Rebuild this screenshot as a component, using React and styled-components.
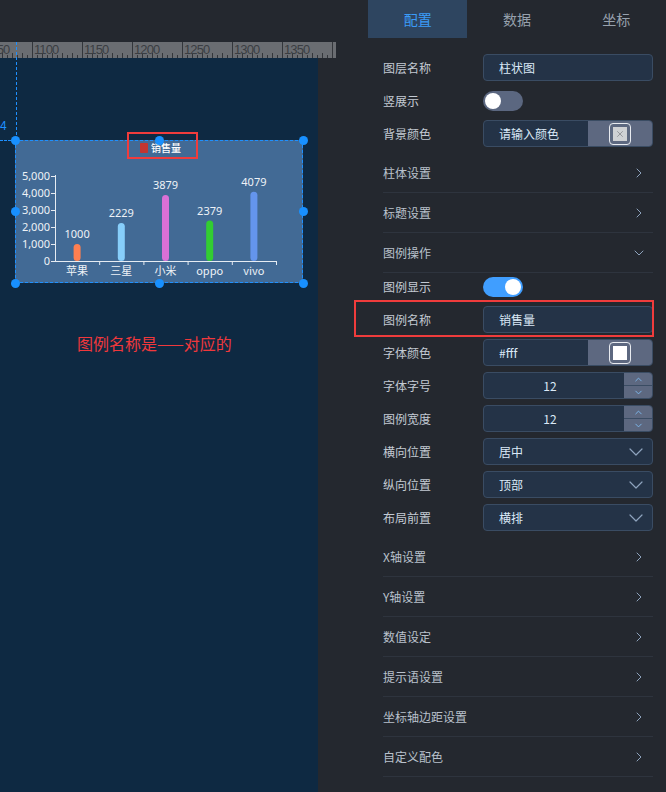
import styled, { createGlobalStyle } from 'styled-components';
import { ChevronRight, ChevronDown, ChevronUp, X } from 'lucide-react';

const GlobalStyle = createGlobalStyle`
  html, body {
    margin: 0;
    padding: 0;
    background: #24282f;
  }
  body {
    font-family: "Noto Sans CJK SC", "Noto Sans", sans-serif;
  }
  #root {
    width: 666px;
    height: 792px;
    overflow: hidden;
  }
`;

const CN = '"Noto Sans CJK SC", "Noto Sans", sans-serif';

const DATA = [
  { name: '苹果', value: 1000, color: '#ff7f50' },
  { name: '三星', value: 2229, color: '#87cefa' },
  { name: '小米', value: 3879, color: '#da70d6' },
  { name: 'oppo', value: 2379, color: '#32cd32' },
  { name: 'vivo', value: 4079, color: '#6495ed' },
];

const Page = styled.div`
  display: flex;
  width: 666px;
  height: 792px;
  background: #24282f;
  overflow: hidden;
`;

/* ---------- left: editor workspace ---------- */

const Workspace = styled.div`
  position: relative;
  width: 368px;
  display: flex;
  flex-direction: column;
`;

const TopGap = styled.div`
  height: 42px;
`;

const RulerSvg = styled.svg`
  display: block;
  width: 336px;
  height: 16px;
  background: #6a6d72;
`;

const Canvas = styled.div`
  position: relative;
  flex: 1;
  width: 318px;
  background: #0e2942;
`;

const GuideV = styled.div`
  position: absolute;
  left: 16px;
  top: 42px;
  height: 98px;
  border-left: 1px dashed #1e90ff;
  z-index: 2;
`;

const GuideH = styled.div`
  position: absolute;
  left: 0;
  top: 82px;
  width: 15px;
  border-top: 1px dashed #1e90ff;
`;

const GuideLabel = styled.span`
  position: absolute;
  left: 0;
  top: 61px;
  font: 12px "Liberation Sans", sans-serif;
  color: #1e90ff;
`;

const ChartBox = styled.div`
  position: absolute;
  left: 15px;
  top: 82px;
  width: 288px;
  height: 143px;
  background: #426a95;
  outline: 1px dashed #1e90ff;
  outline-offset: -1px;

  svg {
    display: block;
  }
`;

const Handle = styled.span`
  position: absolute;
  left: calc(${(p) => p.$x}% - 4.5px);
  top: calc(${(p) => p.$y}% - 4.5px);
  width: 9px;
  height: 9px;
  border-radius: 50%;
  background: #1890ff;
`;

const LegendMark = styled.span`
  position: absolute;
  left: 112px;
  top: -8px;
  width: 71px;
  height: 27px;
  box-sizing: border-box;
  border: 2px solid #f03c3c;
`;

const Note = styled.div`
  position: absolute;
  left: 77px;
  top: 273px;
  font: 16px ${CN};
  color: #f0383c;
  white-space: nowrap;
`;

function Ruler() {
  const ticks = [];
  for (let x = -18; x <= 336; x += 5) {
    const rel = (x + 18) % 50;
    const len = rel === 0 ? 16 : rel % 10 === 0 ? 5 : 3;
    ticks.push(<line key={x} x1={x + 0.5} x2={x + 0.5} y1={16 - len} y2={16} stroke="#33363b" strokeWidth="1" />);
  }
  const labels = [];
  for (let i = 0; i < 7; i++) {
    const x = -18 + i * 50;
    labels.push(
      <text key={i} x={x + 2} y={12} fontSize="13" fill="#3a3d42" fontFamily="'Liberation Sans', sans-serif" letterSpacing="-0.9">
        {1050 + i * 50}
      </text>
    );
  }
  return (
    <RulerSvg viewBox="0 0 336 16">
      {ticks}
      {labels}
    </RulerSvg>
  );
}

function BarChart() {
  const x0 = 40;
  const y0 = 121;
  const step = 44.2;
  const scale = 85 / 5000;
  return (
    <svg width="288" height="143" viewBox="0 0 288 143">
      <rect x="125" y="3" width="8" height="10" rx="1" fill="#c23531" />
      <text x="136" y="12" fontSize="10" fontWeight="500" fill="#fff" fontFamily={CN}>
        销售量
      </text>
      <line x1={x0 + 0.5} x2={x0 + 0.5} y1={35} y2={y0} stroke="#e6ecf3" />
      {[0, 1000, 2000, 3000, 4000, 5000].map((v) => {
        const y = y0 - v * scale;
        return (
          <g key={v}>
            <line x1={x0 - 4} x2={x0} y1={y + 0.5} y2={y + 0.5} stroke="#e6ecf3" />
            <text x={x0 - 5} y={y + 4} fontSize="11" textAnchor="end" fill="#eef2f7" fontFamily="'Noto Sans', sans-serif">
              {v.toLocaleString('en-US')}
            </text>
          </g>
        );
      })}
      <line x1={x0} x2={x0 + step * 5} y1={y0 + 0.5} y2={y0 + 0.5} stroke="#e6ecf3" />
      {DATA.map((d, i) => {
        const cx = x0 + step * i + step / 2;
        const h = d.value * scale;
        return (
          <g key={d.name}>
            <line x1={x0 + step * (i + 1) + 0.5} x2={x0 + step * (i + 1) + 0.5} y1={y0} y2={y0 + 4} stroke="#e6ecf3" />
            <rect x={cx - 3.5} y={y0 - h} width="7" height={h} rx="3.5" fill={d.color} />
            <text x={cx} y={y0 - h - 6} fontSize="11" textAnchor="middle" fill="#eef2f7" fontFamily="'Noto Sans', sans-serif">
              {d.value}
            </text>
            <text x={cx} y={y0 + 14} fontSize="11" textAnchor="middle" fill="#eef2f7" fontFamily={CN}>
              {d.name}
            </text>
          </g>
        );
      })}
    </svg>
  );
}

/* ---------- right: property panel ---------- */

const Panel = styled.aside`
  width: 298px;
  display: flex;
  flex-direction: column;
  background: #24282f;
`;

const Tabs = styled.div`
  display: flex;
  height: 38px;
`;

const Tab = styled.div`
  flex: 1;
  display: flex;
  align-items: center;
  justify-content: center;
  font-size: 14px;
  color: ${(p) => (p.$active ? '#3b9cf8' : '#97a1ad')};
  background: ${(p) => (p.$active ? '#2e4560' : 'transparent')};
`;

const Form = styled.div`
  padding: 16px 13px 0 15px;
  display: flex;
  flex-direction: column;
`;

const Group = styled.div`
  display: flex;
  flex-direction: column;
  gap: 6px;
  margin-bottom: 6px;
`;

const FieldRow = styled.div`
  position: relative;
  display: grid;
  grid-template-columns: 100px 1fr;
  align-items: center;
  height: 27px;

  ${(p) =>
    p.$highlight &&
    `
    &::after {
      content: '';
      position: absolute;
      left: -29px;
      right: -1px;
      top: -6px;
      bottom: -4px;
      border: 2px solid #f03c3c;
      pointer-events: none;
    }
  `}
`;

const Label = styled.span`
  font-size: 12px;
  color: #c3cad3;
`;

const InputBox = styled.div`
  height: 27px;
  box-sizing: border-box;
  display: flex;
  align-items: center;
  background: #243347;
  border: 1px solid #3a4c63;
  border-radius: 4px;
  overflow: hidden;
  font-size: 12px;
  color: #dbe9f7;
`;

const InputText = styled.span`
  flex: 1;
  padding-left: 15px;
  text-align: ${(p) => (p.$center ? 'center' : 'left')};
  ${(p) => p.$center && 'padding: 0 8px 0 0;'}
`;

const ColorSide = styled.div`
  width: 64px;
  align-self: stretch;
  display: flex;
  align-items: center;
  justify-content: center;
  background: #5d6880;
`;

const Swatch = styled.span`
  width: 22px;
  height: 22px;
  box-sizing: border-box;
  border: 1.5px solid #e8ebf0;
  border-radius: 4px;
  padding: 3px;
  display: flex;
`;

const SwatchFill = styled.span`
  flex: 1;
  display: flex;
  align-items: center;
  justify-content: center;
  background: ${(p) => p.$color};
`;

const Spinner = styled.div`
  width: 28px;
  align-self: stretch;
  display: flex;
  flex-direction: column;
  background: #5d6880;
`;

const SpinBtn = styled.span`
  flex: 1;
  display: flex;
  align-items: center;
  justify-content: center;
  color: #7ebaf0;
  & + & {
    border-top: 1px solid #3a4c63;
  }
`;

const SelectIcon = styled.span`
  display: flex;
  color: #8ea3bd;
  margin-right: 4px;
`;

const Toggle = styled.span`
  position: relative;
  width: 40px;
  height: 20px;
  border-radius: 10px;
  background: ${(p) => (p.$on ? '#409eff' : '#5b6780')};

  &::after {
    content: '';
    position: absolute;
    top: 2px;
    left: ${(p) => (p.$on ? '22px' : '2px')};
    width: 16px;
    height: 16px;
    border-radius: 50%;
    background: #fff;
  }
`;

const CollapseRow = styled.div`
  height: 40px;
  box-sizing: border-box;
  display: flex;
  align-items: center;
  justify-content: space-between;
  border-bottom: 1px solid #2e343e;
  font-size: 12px;
  color: #b9c1cc;
`;

const RowIcon = styled.span`
  display: flex;
  color: #8ea3bd;
  margin-right: 6px;
`;

function Collapse({ title, open }) {
  return (
    <CollapseRow>
      <span>{title}</span>
      <RowIcon>{open ? <ChevronDown size={16} strokeWidth={1.5} /> : <ChevronRight size={16} strokeWidth={1.5} />}</RowIcon>
    </CollapseRow>
  );
}

function TextField({ label, value, highlight }) {
  return (
    <FieldRow $highlight={highlight}>
      <Label>{label}</Label>
      <InputBox>
        <InputText>{value}</InputText>
      </InputBox>
    </FieldRow>
  );
}

function ToggleField({ label, on }) {
  return (
    <FieldRow>
      <Label>{label}</Label>
      <Toggle $on={on} />
    </FieldRow>
  );
}

function ColorField({ label, value, color }) {
  return (
    <FieldRow>
      <Label>{label}</Label>
      <InputBox>
        <InputText>{value}</InputText>
        <ColorSide>
          <Swatch>
            <SwatchFill $color={color || '#cfd1d4'}>
              {!color && <X size={10} strokeWidth={2} color="#8a8d92" />}
            </SwatchFill>
          </Swatch>
        </ColorSide>
      </InputBox>
    </FieldRow>
  );
}

function NumberField({ label, value }) {
  return (
    <FieldRow>
      <Label>{label}</Label>
      <InputBox>
        <InputText $center>{value}</InputText>
        <Spinner>
          <SpinBtn>
            <ChevronUp size={11} strokeWidth={2} />
          </SpinBtn>
          <SpinBtn>
            <ChevronDown size={11} strokeWidth={2} />
          </SpinBtn>
        </Spinner>
      </InputBox>
    </FieldRow>
  );
}

function SelectField({ label, value }) {
  return (
    <FieldRow>
      <Label>{label}</Label>
      <InputBox>
        <InputText>{value}</InputText>
        <SelectIcon>
          <ChevronDown size={24} strokeWidth={1.2} />
        </SelectIcon>
      </InputBox>
    </FieldRow>
  );
}

export default function App() {
  return (
    <Page>
      <GlobalStyle />
      <Workspace>
        <TopGap />
        <Ruler />
        <GuideV />
        <Canvas>
          <GuideH />
          <GuideLabel>4</GuideLabel>
          <ChartBox>
            <BarChart />
            <LegendMark />
            {[
              [0, 0], [50, 0], [100, 0],
              [0, 50], [100, 50],
              [0, 100], [50, 100], [100, 100],
            ].map(([x, y]) => (
              <Handle key={`${x}-${y}`} $x={x} $y={y} />
            ))}
          </ChartBox>
          <Note>图例名称是——对应的</Note>
        </Canvas>
      </Workspace>

      <Panel>
        <Tabs>
          <Tab $active>配置</Tab>
          <Tab>数据</Tab>
          <Tab>坐标</Tab>
        </Tabs>
        <Form>
          <Group>
            <TextField label="图层名称" value="柱状图" />
            <ToggleField label="竖展示" />
            <ColorField label="背景颜色" value="请输入颜色" />
          </Group>
          <Collapse title="柱体设置" />
          <Collapse title="标题设置" />
          <Collapse title="图例操作" open />
          <Group>
            <ToggleField label="图例显示" on />
            <TextField label="图例名称" value="销售量" highlight />
            <ColorField label="字体颜色" value="#fff" color="#ffffff" />
            <NumberField label="字体字号" value="12" />
            <NumberField label="图例宽度" value="12" />
            <SelectField label="横向位置" value="居中" />
            <SelectField label="纵向位置" value="顶部" />
            <SelectField label="布局前置" value="横排" />
          </Group>
          <Collapse title="X轴设置" />
          <Collapse title="Y轴设置" />
          <Collapse title="数值设定" />
          <Collapse title="提示语设置" />
          <Collapse title="坐标轴边距设置" />
          <Collapse title="自定义配色" />
        </Form>
      </Panel>
    </Page>
  );
}
